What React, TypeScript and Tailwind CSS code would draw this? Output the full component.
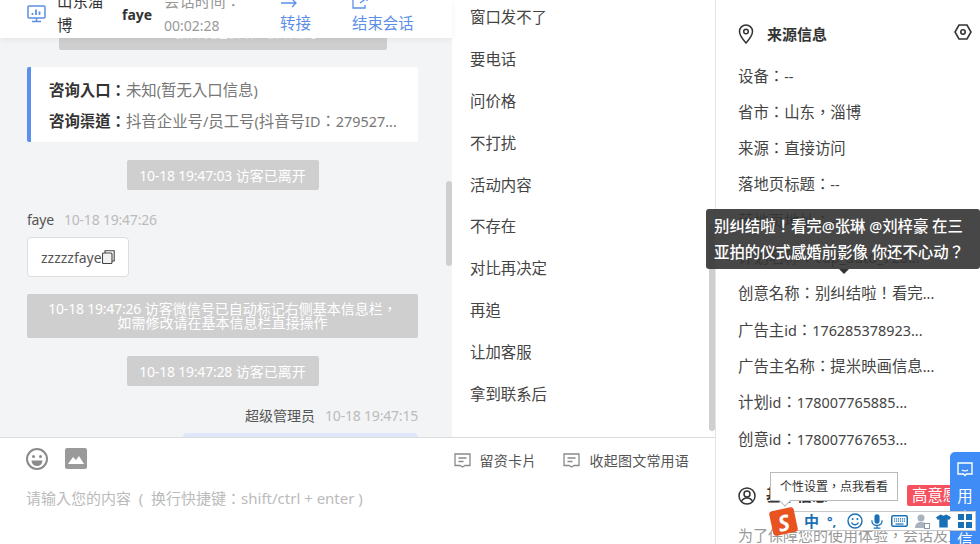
import { useState } from 'react'

const FONT = "font-['Noto_Sans','Noto_Sans_CJK_TC',sans-serif]"

const phrases = ['窗口发不了', '要电话', '问价格', '不打扰', '活动内容', '不存在', '对比再决定', '再追', '让加客服', '拿到联系后']

const sourceRows = [
  '设备：--',
  '省市：山东，淄博',
  '来源：直接访问',
  '落地页标题：--',
  '落地页地址：--',
  '计划名称：cdp_auto_728...',
  '创意名称：别纠结啦！看完...',
  '广告主id：176285378923...',
  '广告主名称：提米映画信息...',
  '计划id：178007765885...',
  '创意id：178007767653...',
]

// latin runs sit a size smaller, the digits look narrow next to the cjk glyphs
function Mixed({ text }: { text: string }) {
  const parts = text.split(/([\x20-\x7e]+)/).filter(Boolean)
  return (
    <>
      {parts.map((p, i) =>
        /^[\x20-\x7e]+$/.test(p) ? <span key={i} className="text-[14.4px]">{p}</span> : <span key={i}>{p}</span>,
      )}
    </>
  )
}

function Stamp({ text }: { text: string }) {
  return <span className="tracking-[-0.2px]">{text}</span>
}

function SysMsg({ time, text }: { time: string; text: string }) {
  return (
    <div className="mx-auto flex h-[30px] w-[192px] items-center justify-center rounded-[2px] bg-[#cfcfcf] text-[14px] text-white">
      <Stamp text={time} />&nbsp;{text}
    </div>
  )
}

function CommentIcon() {
  return (
    <svg width="17" height="15" viewBox="0 0 17 15" fill="none" stroke="#8a8a8a" strokeWidth="1.3">
      <path d="M1 1h15v11.500h-5l-2.500 1.600L6 12.500H1z" />
      <path d="M4.500 5h8M4.500 8.500h5" />
    </svg>
  )
}

function ImeBar() {
  return (
    <div className="absolute left-[792px] top-[511px] z-30 flex h-[20px] w-[184px] items-center border border-[#c8c8c8] bg-white pl-[11px] text-[#1a6fb5]">
      <span className="w-[15px] text-[15px] font-bold leading-none">中</span>
      <span className="ml-[8px] w-[14px] text-[13px] font-bold leading-none">°,</span>
      <svg className="ml-[6px]" width="16" height="16" viewBox="0 0 16 16" fill="none" stroke="currentColor" strokeWidth="1.400">
        <circle cx="8" cy="8" r="7" />
        <circle cx="5.600" cy="6" r="1" fill="currentColor" stroke="none" />
        <circle cx="10.400" cy="6" r="1" fill="currentColor" stroke="none" />
        <path d="M4.500 9.500c1.500 3 5.500 3 7 0" />
      </svg>
      <svg className="ml-[8px]" width="12" height="17" viewBox="0 0 14 17" fill="currentColor">
        <rect x="4" y="0" width="6" height="11" rx="3" />
        <path d="M1 7c0 4 2.500 6 6 6s6-2 6-6" fill="none" stroke="currentColor" strokeWidth="1.400" />
        <path d="M6.300 13h1.400v2.500H11V17H3v-1.500h3.300z" />
      </svg>
      <svg className="ml-[8px]" width="17" height="12" viewBox="0 0 17 12" fill="none" stroke="currentColor">
        <rect x="0.750" y="0.750" width="15.500" height="10.500" rx="1.500" strokeWidth="1.500" />
        <path d="M3 3.800h11M3 6.200h11" strokeWidth="1.200" strokeDasharray="1.200 0.800" />
        <path d="M4.500 9h8" strokeWidth="1.200" />
      </svg>
      <svg className="ml-[7px]" width="15" height="15" viewBox="0 0 15 15" fill="#a9b3c0">
        <circle cx="6" cy="4" r="3.500" />
        <path d="M0 14c0-4 2.500-6 6-6s5 1 6 3v3z" />
        <rect x="9.500" y="9.500" width="5" height="5" fill="#fff" stroke="#8a97a8" />
      </svg>
      <svg className="ml-[6px]" width="15" height="14" viewBox="0 0 16 14" fill="currentColor">
        <path d="M5 0l3 1.500L11 0l5 3-2 3-1.500-.8V14h-9V5.200L2 6 0 3z" />
      </svg>
      <svg className="ml-[7px]" width="14" height="14" viewBox="0 0 14 14" fill="currentColor">
        <rect x="0" y="0" width="6" height="6" />
        <rect x="8" y="0" width="6" height="6" />
        <rect x="0" y="8" width="6" height="6" />
        <rect x="8" y="8" width="6" height="6" />
      </svg>
    </div>
  )
}

export default function App() {
  const [draft, setDraft] = useState('')

  return (
    <div className={`${FONT} relative flex h-[544px] w-[980px] overflow-hidden bg-white text-[15.4px] text-[#333]`}>
      {/* chat column */}
      <div className="relative flex h-full w-[452px] shrink-0 flex-col bg-[#f3f4f6]">
        <header className="relative z-10 flex h-[38px] shrink-0 items-center overflow-hidden bg-white pb-[10px] shadow-[0_2px_6px_rgba(0,0,0,0.06)]">
          <svg className="ml-[27px] shrink-0" width="19" height="18" viewBox="0 0 19 18" fill="none" stroke="#5b8fe8" strokeWidth="1.500">
            <rect x="1" y="1" width="17" height="12" rx="1" />
            <path d="M9.500 13v3M5 16.500h9" />
            <path d="M5.500 10V8M9 10V4.500M12.500 10V6.500" strokeWidth="1.800" />
          </svg>
          <div className="ml-[11px] w-[47px] shrink-0 leading-[24px]">山东淄博</div>
          <div className="ml-[18px] w-[42px] shrink-0 text-[14px] font-bold">faye</div>
          <div className="w-[116px] shrink-0 leading-[24px] text-[#999]">
            <Mixed text="会话时间：" />
            <span className="text-[14px]">00:02:28</span>
          </div>
          <div className="mt-[3px] flex w-[72px] shrink-0 flex-col text-[#5b8fe8]">
            <svg className="mb-[5px]" width="18" height="12" viewBox="0 0 18 12" fill="none" stroke="currentColor" strokeWidth="1.300">
              <path d="M1 6h15M12 2l4 4-4 4" />
            </svg>
            <span className="leading-[20px]">转接</span>
          </div>
          <div className="mt-[3px] flex shrink-0 flex-col text-[#5b8fe8]">
            <svg className="mb-[5px]" width="18" height="12" viewBox="0 0 18 12" fill="none" stroke="currentColor" strokeWidth="1.300">
              <path d="M6 1H1v10h12V8M8 6l7-5M11 1h4v3" />
            </svg>
            <span className="leading-[20px]">结束会话</span>
          </div>
        </header>

        <div className="flex min-h-0 flex-1 flex-col overflow-hidden pl-[27px] pr-[34px]">
          <div className="mx-auto -mt-[22px] flex h-[34px] w-[328px] shrink-0 items-center justify-center rounded-[2px] bg-[#cfcfcf] text-[13px] text-white">
            10-18 19:46:50 预留发起会话，会话编号：4574
          </div>
          <div className="mt-[17px] shrink-0 rounded-[2px] border-l-4 border-[#5b8ff0] bg-white pb-[5px] pl-[18px] pr-[20px] pt-[8px] text-[#777]">
            <div className="truncate leading-[31px]">
              <span className="font-bold text-[#333]">咨询入口：</span>
              <Mixed text="未知(暂无入口信息)" />
            </div>
            <div className="truncate leading-[31px]">
              <span className="font-bold text-[#333]">咨询渠道：</span>
              <Mixed text="抖音企业号/员工号(抖音号ID：279527..." />
            </div>
          </div>
          <div className="mt-[18px] shrink-0"><SysMsg time="10-18 19:47:03" text="访客已离开" /></div>
          <div className="mt-[20px] flex shrink-0 items-center gap-[10px] text-[14px] leading-[20px]">
            <span className="tracking-[-0.2px] text-[#555]">faye</span>
            <span className="tracking-[-0.2px] text-[#bbb]">10-18 19:47:26</span>
          </div>
          <div className="mt-[7px] flex h-[40px] w-[102px] shrink-0 items-center rounded-[4px] border border-[#ddd] bg-white pl-[13px] text-[14px] text-[#555]">
            zzzzzfaye
            <svg width="13" height="14" viewBox="0 0 13 14" fill="none" stroke="#444" strokeWidth="1.100">
              <rect x="0.500" y="3" width="9.500" height="10.500" rx="1" fill="#f3f3f3" />
              <path d="M3 3V0.800h9.200V11H10" />
            </svg>
          </div>
          <div className="mt-[17px] flex h-[44px] shrink-0 flex-col items-center justify-center rounded-[2px] bg-[#cfcfcf] text-[14px] leading-[14px] text-white">
            <div><Stamp text="10-18 19:47:26" /> 访客微信号已自动标记右侧基本信息栏，</div>
            <div>如需修改请在基本信息栏直接操作</div>
          </div>
          <div className="mt-[18px] shrink-0"><SysMsg time="10-18 19:47:28" text="访客已离开" /></div>
          <div className="mt-[20px] flex shrink-0 items-center justify-end gap-[10px] text-[14px] leading-[20px]">
            <span className="text-[#555]">超级管理员</span>
            <span className="tracking-[-0.2px] text-[#bbb]">10-18 19:47:15</span>
          </div>
          <div className="ml-auto mt-[7px] h-[20px] w-[235px] shrink-0 rounded-[4px] bg-[#dfe8fb]" />
        </div>

        <div className="absolute right-0 top-[181px] h-[85px] w-[6px] rounded-[3px] bg-[#cfcfcf]" />
      </div>

      {/* phrases column */}
      <div className="relative flex h-full w-[264px] shrink-0 flex-col border-r border-[#e4e4e4] bg-white">
        <ul className="h-[437px] shrink-0 overflow-hidden pl-[18px]">
          {phrases.map((p) => (
            <li key={p} className="flex h-[41.800px] items-center text-[#444] first:mt-[-3px]">{p}</li>
          ))}
        </ul>
        <div className="absolute right-0 top-[224px] h-[207px] w-[6px] rounded-[3px] bg-[#cfcfcf]" />
      </div>

      {/* source info column */}
      <aside className="relative h-full min-w-0 flex-1 overflow-hidden bg-white pl-[22px]">
        <div className="mt-[22px] flex h-[24px] items-center">
          <svg width="16" height="20" viewBox="0 0 16 20" fill="none" stroke="#333" strokeWidth="1.500">
            <path d="M8 19C4 14.500 1.500 11 1.500 7.500a6.500 6.500 0 0 1 13 0C14.500 11 12 14.500 8 19z" />
            <circle cx="8" cy="7.500" r="2.300" />
          </svg>
          <span className="ml-[13px] text-[15px] font-bold text-[#333]">来源信息</span>
          <svg className="-mt-[4px] ml-auto mr-[8px]" width="18" height="16" viewBox="0 0 18 16" fill="none" stroke="#333" strokeWidth="1.600">
            <path d="M5 1h8l4 7-4 7H5L1 8z" />
            <circle cx="9" cy="8" r="2.200" />
          </svg>
        </div>
        <div className="mt-[12px] flex flex-col">
          {sourceRows.map((r) => (
            <div key={r} className="flex h-[36.300px] items-center whitespace-nowrap text-[#444]">
              <span><Mixed text={r} /></span>
            </div>
          ))}
        </div>
        <div className="mt-[27px] flex items-center">
          <svg width="18" height="18" viewBox="0 0 18 18" fill="none" stroke="#333" strokeWidth="1.500">
            <circle cx="9" cy="9" r="8" />
            <circle cx="9" cy="7" r="3" />
            <path d="M3.500 14.500c1-2.500 3-3.500 5.500-3.500s4.500 1 5.500 3.500" />
          </svg>
          <span className="ml-[10px] font-bold">基本信息</span>
          <span className="ml-auto flex h-[21px] w-[73px] items-center rounded-[2px] bg-[#f5515f] pl-[5px] text-white">高意愿</span>
        </div>
        <div className="mt-[17px] whitespace-nowrap text-[15px] text-[#999]">为了保障您的使用体验，会话及主当</div>
      </aside>

      {/* chat footer */}
      <div className="absolute bottom-0 left-0 flex h-[107px] w-[716px] flex-col border-t border-r border-t-[#dcdcdc] border-r-[#e4e4e4] bg-white">
        <div className="flex items-start pl-[26px] pt-[10px]">
          <svg width="22" height="22" viewBox="0 0 22 22" fill="none" stroke="#8a8a8a" strokeWidth="2">
            <circle cx="11" cy="11" r="10" />
            <circle cx="7.500" cy="8.500" r="1.500" fill="#8a8a8a" stroke="none" />
            <circle cx="14.500" cy="8.500" r="1.500" fill="#8a8a8a" stroke="none" />
            <path d="M5.500 12.500h11a5.500 5.500 0 0 1-11 0z" fill="#8a8a8a" stroke="none" />
          </svg>
          <svg className="ml-[17px]" width="22" height="22" viewBox="0 0 22 22">
            <rect width="22" height="21" rx="2" fill="#9a9a9a" />
            <path d="M3 16l5-7 3 3 3-4 5 8z" fill="#fff" />
          </svg>
          <div className="ml-auto mr-[26px] mt-[2px] flex items-center text-[14px] text-[#555]">
            <CommentIcon />
            <span className="ml-[9px] tracking-[0.25px]">留资卡片</span>
            <span className="ml-[26px]"><CommentIcon /></span>
            <span className="ml-[10px] tracking-[0.2px]">收起图文常用语</span>
          </div>
        </div>
        <input
          value={draft}
          onChange={(e) => setDraft(e.target.value)}
          placeholder={'请输入您的内容\u00a0\u00a0(\u00a0\u00a0换行快捷键：shift/ctrl + enter )'}
          className="ml-[26px] mt-[16px] w-[600px] bg-transparent text-[15px] outline-none placeholder:text-[#bbb]"
        />
      </div>

      {/* creative name tooltip */}
      <div className="absolute left-[706px] top-[209px] z-20 w-[274px] rounded-[3px] bg-[#333]/90 px-[8px] pb-[3px] pt-[5px] font-medium leading-[26px] text-white">
        <Mixed text="别纠结啦！看完@张琳 @刘梓豪 在三亚拍的仪式感婚前影像 你还不心动？" />
        <div className="absolute bottom-[-5px] left-[133px] h-0 w-0 border-x-[5px] border-t-[5px] border-x-transparent border-t-[#333]" />
      </div>

      {/* side tab */}
      <div className="absolute right-0 top-[452px] z-20 flex h-[92px] w-[30px] flex-col items-center rounded-tl-[5px] bg-[#3f8cf7] pt-[10px] leading-[22px] text-white">
        <svg className="shrink-0" width="16" height="15" viewBox="0 0 16 15" fill="none" stroke="currentColor" strokeWidth="1.400">
          <path d="M1 1h14v11H9.500L8 13.500 6.500 12H1z" />
          <path d="M5 8c1.500 1 4.500 1 6 0" />
        </svg>
        <span className="mt-[9px]">用</span>
        <span>户</span>
        <span>信</span>
      </div>

      {/* input method widget */}
      <div className="absolute left-[770px] top-[472px] z-30 flex h-[29px] w-[128px] items-center justify-center border border-[#bbb] bg-white text-[12px] text-[#333]">
        个性设置，点我看看
        <div className="absolute bottom-[-5px] left-[10px] h-[8px] w-[8px] rotate-45 border-b border-r border-[#bbb] bg-white" />
      </div>
      <ImeBar />
      <div className="absolute left-[771px] top-[509px] z-30 flex h-[25px] w-[25px] -rotate-12 items-center justify-center rounded-[3px] bg-[#e8531f] text-[22px] font-bold italic leading-none text-white">
        S
      </div>
    </div>
  )
}
